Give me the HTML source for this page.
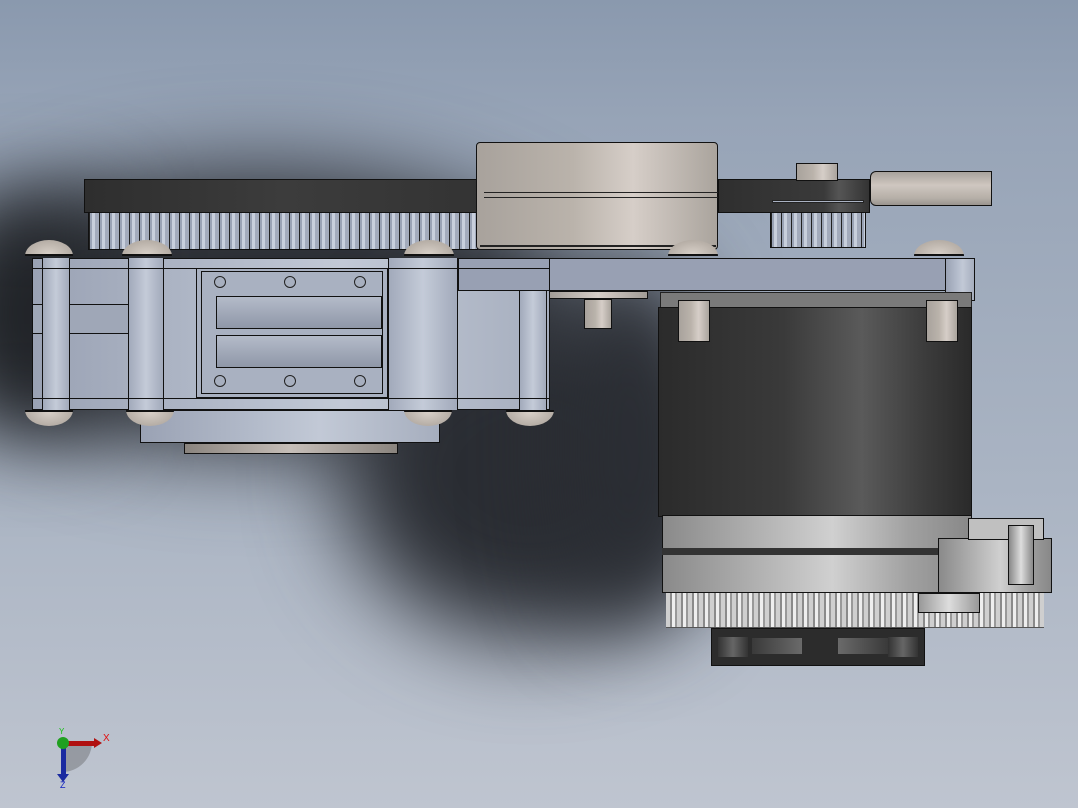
<!DOCTYPE html>
<html><head><style>
*{margin:0;padding:0;box-sizing:border-box}
body{width:1078px;height:808px;overflow:hidden;position:relative;font-family:"Liberation Sans",sans-serif;
background:linear-gradient(180deg,#8a99ae 0%,#97a4b7 15%,#aab4c3 60%,#bfc5d0 100%)}
.a{position:absolute}
.b{border:1px solid #111}
.met{background:linear-gradient(90deg,#9aa2b4,#b4bccb 40%,#c2c9d6 60%,#a6aebe)}
.beige{background:linear-gradient(90deg,#a8a29c,#bab3ab 40%,#d6cec8 65%,#aaa49d)}
.teeth{background:repeating-linear-gradient(90deg,#222 0 1px,#9aa3b5 1px 3px,#c8cfdc 3px 6px,#a3abbc 6px 10px)}
.bolt{background:radial-gradient(ellipse at 50% 100%,#d8d0c8,#a69e96);border-radius:50% 50% 0 0/100% 100% 0 0;border-bottom:2px solid #111}
.boltb{background:radial-gradient(ellipse at 50% 0%,#d8d0c8,#a69e96);border-radius:0 0 50% 50%/0 0 100% 100%;border-top:2px solid #111}
.hole{width:12px;height:12px;border-radius:50%;border:1px solid #222;background:#a7afbf}
.dark{background:linear-gradient(90deg,#2b2b2b,#3a3a3a 40%,#5a5a5a 65%,#3c3c3c 85%,#2a2a2a)}
.gray{background:linear-gradient(90deg,#8a8a8a,#b0b0b0 30%,#d0d0d0 55%,#a0a0a0 80%,#888)}
.sh{position:absolute;background:#2a2d33;filter:blur(45px)}
</style></head><body>
<!-- shadows -->
<div class="sh" style="left:-60px;top:170px;width:640px;height:280px;border-radius:50%"></div>
<div class="sh" style="left:-40px;top:200px;width:140px;height:230px;background:#202327"></div>
<div class="sh" style="left:340px;top:300px;width:380px;height:340px;border-radius:50%"></div>
<div class="sh" style="left:560px;top:260px;width:140px;height:360px;border-radius:40%"></div>

<!-- left belt -->
<div class="a b" style="left:84px;top:179px;width:400px;height:34px;background:linear-gradient(90deg,#2e2e2e,#3c3c3c 50%,#333)"></div>
<div class="a teeth" style="left:88px;top:212px;width:390px;height:38px;border:1px solid #111"></div>
<!-- big pulley -->
<div class="a b beige" style="left:476px;top:142px;width:242px;height:108px;border-radius:4px"></div>
<div class="a" style="left:484px;top:192px;width:234px;height:6px;border-top:1px solid #222;border-bottom:1px solid #222"></div>
<div class="a" style="left:480px;top:245px;width:236px;height:2px;background:#222"></div>
<!-- right belt -->
<div class="a b" style="left:718px;top:179px;width:152px;height:34px;background:linear-gradient(90deg,#2f2f2f,#3a3a3a 70%,#555 80%,#333)"></div>
<div class="a b beige" style="left:796px;top:163px;width:42px;height:18px"></div>
<div class="a teeth" style="left:770px;top:212px;width:96px;height:36px;border:1px solid #111"></div>
<div class="a" style="left:772px;top:200px;width:92px;height:3px;background:#aab2c2;border:1px solid #222"></div>
<div class="a b beige" style="left:870px;top:171px;width:122px;height:35px;border-radius:6px 0 0 6px;background:linear-gradient(180deg,#a8a29c,#cfc7c0 40%,#b5aea7 80%,#9a948e)"></div>

<!-- right plate -->
<div class="a b" style="left:458px;top:258px;width:517px;height:33px;background:#98a0b3"></div>
<div class="a b met" style="left:945px;top:258px;width:30px;height:43px"></div>
<div class="a b" style="left:548px;top:291px;width:100px;height:8px;background:linear-gradient(90deg,#a29c96,#d6cec8,#a29c96)"></div>
<div class="a b beige" style="left:584px;top:299px;width:28px;height:30px"></div>
<!-- motor -->
<div class="a" style="left:660px;top:292px;width:312px;height:16px;background:#7a7a7a;border:1px solid #222"></div>
<div class="a b dark" style="left:658px;top:307px;width:314px;height:210px"></div>
<div class="a b beige" style="left:678px;top:300px;width:32px;height:42px"></div>
<div class="a b beige" style="left:926px;top:300px;width:32px;height:42px"></div>
<!-- gearbox -->
<div class="a b gray" style="left:662px;top:515px;width:310px;height:78px"></div>
<div class="a" style="left:662px;top:548px;width:310px;height:7px;background:#333"></div>
<div class="a b gray" style="left:938px;top:538px;width:114px;height:55px"></div>
<div class="a b" style="left:968px;top:518px;width:76px;height:22px;background:#c0c0c0"></div>
<div class="a b" style="left:1008px;top:525px;width:26px;height:60px;background:linear-gradient(90deg,#888,#ddd,#888)"></div>
<div class="a" style="left:666px;top:593px;width:378px;height:35px;background:repeating-linear-gradient(90deg,#cfcfcf 0 4px,#8a8a8a 4px 6px,#eee 6px 9px,#999 9px 11px);border-bottom:1px solid #555"></div>
<div class="a b" style="left:918px;top:593px;width:62px;height:20px;background:linear-gradient(90deg,#999,#ddd,#999)"></div>
<!-- fan -->
<div class="a b" style="left:711px;top:628px;width:214px;height:38px;background:#2c2c2c"></div>
<div class="a" style="left:718px;top:637px;width:30px;height:20px;background:linear-gradient(90deg,#333,#666,#333)"></div>
<div class="a" style="left:752px;top:638px;width:50px;height:16px;background:linear-gradient(90deg,#3a3a3a,#6a6a6a)"></div>
<div class="a" style="left:838px;top:638px;width:50px;height:16px;background:linear-gradient(90deg,#6a6a6a,#3a3a3a)"></div>
<div class="a" style="left:888px;top:637px;width:30px;height:20px;background:linear-gradient(90deg,#333,#666,#333)"></div>

<!-- left block -->
<div class="a b met" style="left:32px;top:258px;width:518px;height:152px"></div>
<div class="a b" style="left:32px;top:304px;width:112px;height:30px;background:#9fa7b7"></div>
<div class="a b" style="left:458px;top:258px;width:92px;height:33px;background:#98a0b3"></div>
<div class="a" style="left:42px;top:258px;width:28px;height:152px;border-left:1px solid #111;border-right:1px solid #111;background:linear-gradient(90deg,#a2aabb,#c4cbd8,#a2aabb)"></div>
<div class="a" style="left:128px;top:258px;width:36px;height:152px;border-left:1px solid #111;border-right:1px solid #111;background:linear-gradient(90deg,#a2aabb,#c4cbd8,#a2aabb)"></div>
<div class="a" style="left:388px;top:258px;width:70px;height:152px;border-left:1px solid #111;border-right:1px solid #111;background:linear-gradient(90deg,#a2aabb,#c4cbd8 50%,#a2aabb)"></div>
<div class="a" style="left:519px;top:291px;width:28px;height:119px;border-left:1px solid #111;border-right:1px solid #111;background:linear-gradient(90deg,#a2aabb,#c4cbd8,#a2aabb)"></div>
<div class="a" style="left:32px;top:268px;width:518px;height:1px;background:#111"></div>
<div class="a" style="left:32px;top:398px;width:518px;height:1px;background:#111"></div>
<div class="a b" style="left:196px;top:268px;width:192px;height:130px;background:#a9b1c1"></div>
<div class="a b" style="left:201px;top:271px;width:182px;height:123px;background:#a9b1c1"></div>
<div class="a b" style="left:216px;top:296px;width:166px;height:33px;background:linear-gradient(180deg,#b4bbc9,#8f97a8)"></div>
<div class="a b" style="left:216px;top:335px;width:166px;height:33px;background:linear-gradient(180deg,#b4bbc9,#8f97a8)"></div>
<div class="a hole" style="left:214px;top:276px"></div><div class="a hole" style="left:284px;top:276px"></div><div class="a hole" style="left:354px;top:276px"></div>
<div class="a hole" style="left:214px;top:375px"></div><div class="a hole" style="left:284px;top:375px"></div><div class="a hole" style="left:354px;top:375px"></div>
<!-- flange -->
<div class="a b met" style="left:140px;top:410px;width:300px;height:33px"></div>
<div class="a b" style="left:184px;top:443px;width:214px;height:11px;background:linear-gradient(90deg,#8a847e,#c6beb8,#8a847e)"></div>
<!-- bolts -->
<div class="a bolt" style="left:25px;top:240px;width:48px;height:16px"></div>
<div class="a bolt" style="left:122px;top:240px;width:50px;height:16px"></div>
<div class="a bolt" style="left:404px;top:240px;width:50px;height:16px"></div>
<div class="a bolt" style="left:668px;top:240px;width:50px;height:16px"></div>
<div class="a bolt" style="left:914px;top:240px;width:50px;height:16px"></div>
<div class="a boltb" style="left:25px;top:410px;width:48px;height:16px"></div>
<div class="a boltb" style="left:126px;top:410px;width:48px;height:16px"></div>
<div class="a boltb" style="left:404px;top:410px;width:48px;height:16px"></div>
<div class="a boltb" style="left:506px;top:410px;width:48px;height:16px"></div>

<!-- triad -->
<div class="a" style="left:62px;top:742px;width:30px;height:30px;border-radius:0 0 30px 0;background:rgba(80,80,80,0.35)"></div>
<div class="a" style="left:62px;top:741px;width:34px;height:5px;background:#b01010"></div>
<div class="a" style="left:94px;top:738px;width:0;height:0;border-left:8px solid #b01010;border-top:5px solid transparent;border-bottom:5px solid transparent"></div>
<div class="a" style="left:61px;top:744px;width:5px;height:32px;background:#1a2aa0"></div>
<div class="a" style="left:57px;top:774px;width:0;height:0;border-top:8px solid #1a2aa0;border-left:6px solid transparent;border-right:6px solid transparent"></div>
<div class="a" style="left:57px;top:737px;width:12px;height:12px;border-radius:50%;background:#20a020"></div>
<div class="a" style="left:103px;top:733px;color:#e01010;font-size:10px">X</div>
<div class="a" style="left:59px;top:727px;color:#10c010;font-size:8px">Y</div>
<div class="a" style="left:60px;top:780px;color:#1020c0;font-size:9px">Z</div>
</body></html>
